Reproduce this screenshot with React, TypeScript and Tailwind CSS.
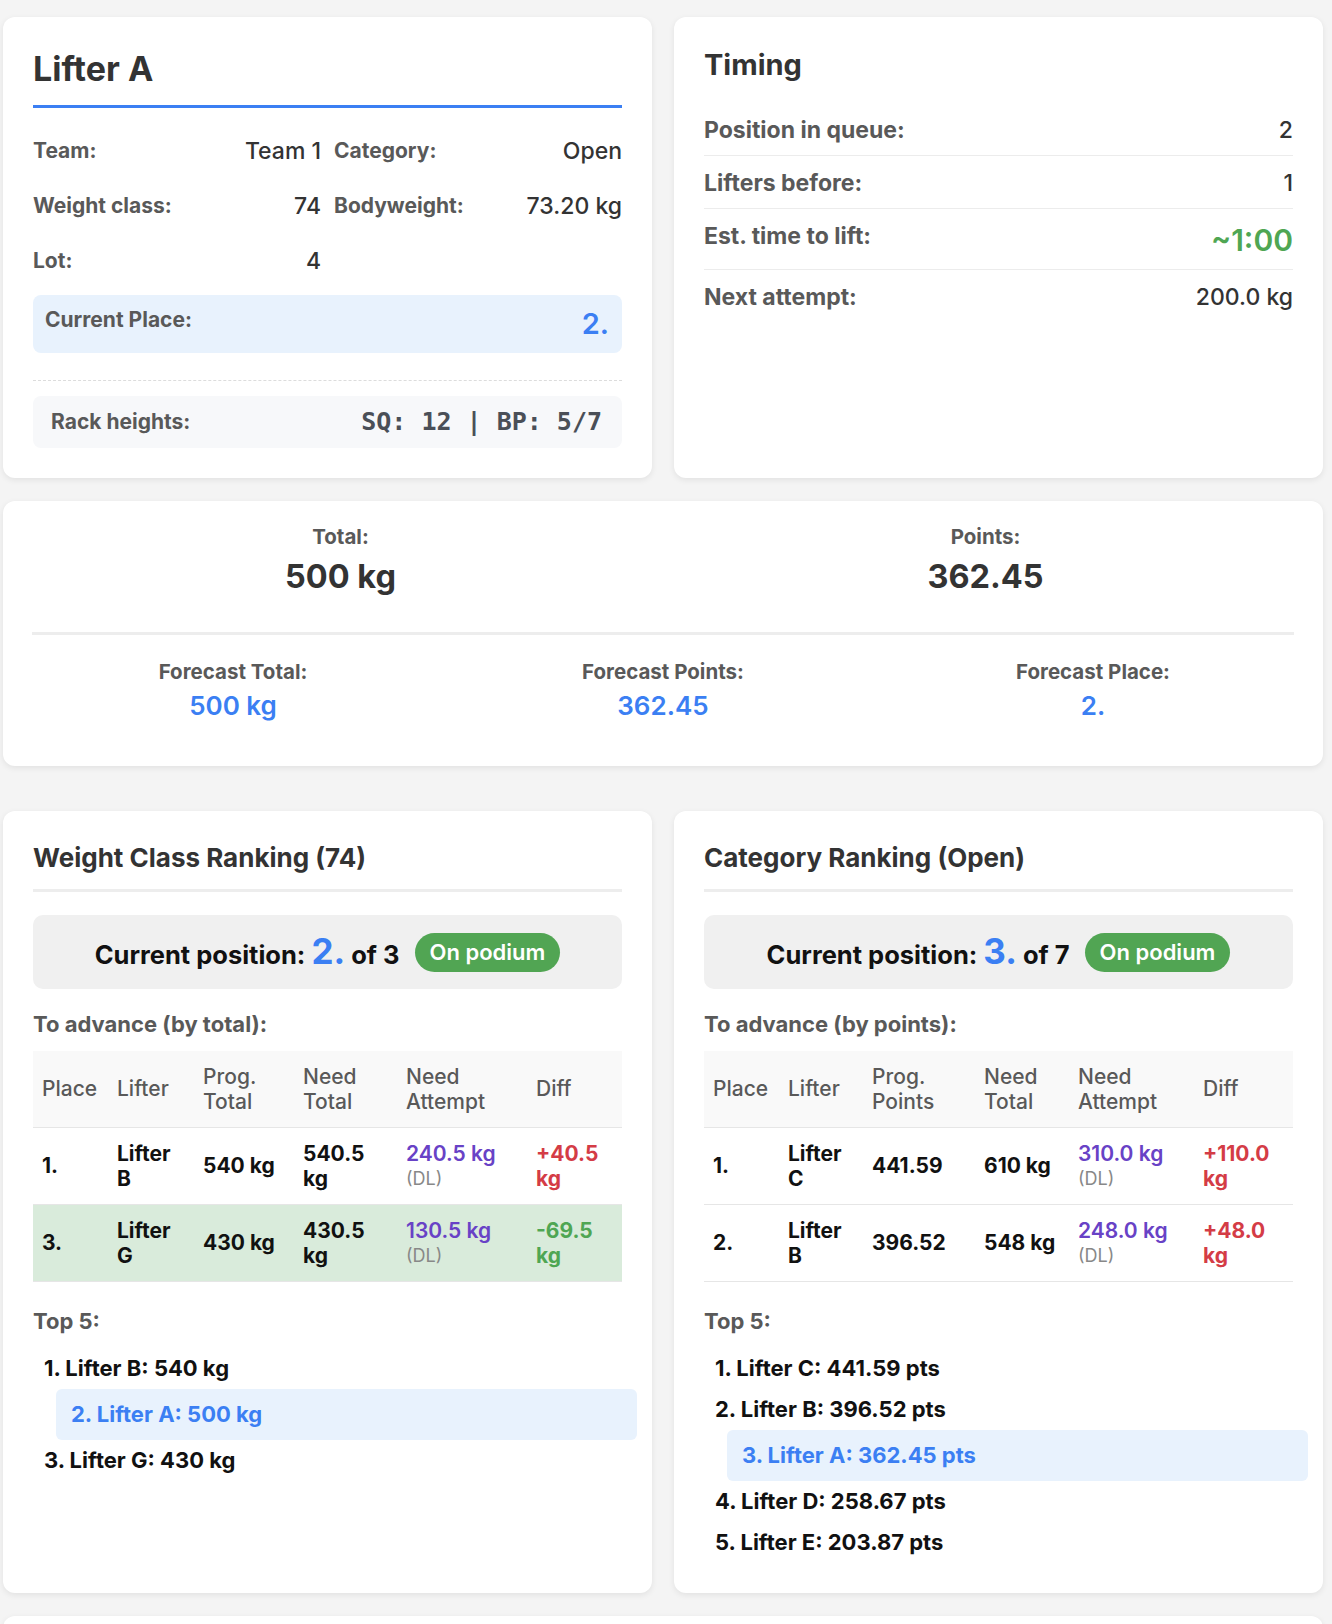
import React from "react";

type Row = { place: string; lifter: string; prog: React.ReactNode; need: React.ReactNode; attempt: string; diff: React.ReactNode; diffColor: string; highlight?: boolean };

const blue = "text-[#3b7ff3]";

function Card(props: { className?: string; children?: React.ReactNode }) {
	return (
		<div className={`bg-white rounded-[12px] shadow-[0_2px_6px_rgba(0,0,0,0.08)] ${props.className ?? ""}`}>
			{props.children}
		</div>
	);
}

function Info(props: { label: string; value?: string }) {
	return (
		<div className="flex justify-between leading-[30px]">
			<span className="text-[21px] font-bold text-[#595959]">{props.label}</span>
			<span className="text-[23px] font-medium text-[#333]">{props.value}</span>
		</div>
	);
}

function LifterCard() {
	return (
		<Card className="p-[30px]">
			<h1 className="text-[34px] leading-[40px] font-bold text-[#333] pt-[2px] pb-[16px] border-b-[3px] border-[#3b7ff3]">Lifter A</h1>
			<div className="mt-[28px] grid grid-cols-2 gap-x-[13px] gap-y-[25px]">
				<Info label="Team:" value="Team 1" />
				<Info label="Category:" value="Open" />
				<Info label="Weight class:" value="74" />
				<Info label="Bodyweight:" value="73.20 kg" />
				<Info label="Lot:" value="4" />
				<div />
			</div>
			<div className="mt-[19px] bg-[#e8f2fd] rounded-[8px] pl-[12px] pr-[13px] py-[8px] flex justify-between items-start">
				<span className="text-[21px] font-bold text-[#595959] leading-[33px]">Current Place:</span>
				<span className={`text-[29px] font-semibold leading-[42px] ${blue}`}>2.</span>
			</div>
			<div className="mt-[27px] border-t border-dashed border-[#dcdcdc] pt-[15px]">
				<div className="h-[52px] bg-[#f7f8fa] rounded-[8px] pl-[18px] pr-[20px] flex items-center justify-between">
					<span className="text-[21px] font-bold text-[#595959]">Rack heights:</span>
					<span className="font-['DejaVu_Sans_Mono',monospace] text-[25px] font-bold text-[#4a4f57]">SQ: 12 | BP: 5/7</span>
				</div>
			</div>
		</Card>
	);
}

function TimingRow(props: { label: string; children: React.ReactNode; last?: boolean }) {
	return (
		<div className={`flex justify-between items-start pt-[12px] pb-[10px] ${props.last ? "" : "border-b border-[#ececec]"}`}>
			<span className="text-[23px] font-bold text-[#595959] leading-[30px]">{props.label}</span>
			{props.children}
		</div>
	);
}

function TimingCard() {
	return (
		<Card className="p-[30px]">
			<h2 className="text-[29px] leading-[35px] font-bold text-[#333] mb-[21px]">Timing</h2>
			<TimingRow label="Position in queue:"><span className="text-[23px] font-medium text-[#333] leading-[30px]">2</span></TimingRow>
			<TimingRow label="Lifters before:"><span className="text-[23px] font-medium text-[#333] leading-[30px]">1</span></TimingRow>
			<TimingRow label="Est. time to lift:"><span className="text-[30px] font-semibold text-[#4fa653] leading-[38px]">~1:00</span></TimingRow>
			<TimingRow label="Next attempt:" last><span className="text-[23px] font-medium text-[#333] leading-[30px]">200.0 kg</span></TimingRow>
		</Card>
	);
}

function Stat(props: { label: string; value: string; big?: boolean }) {
	return (
		<div className="text-center">
			<div className="text-[20.5px] font-bold text-[#595959] leading-[28px]">{props.label}</div>
			{props.big ? (
				<div className="mt-[4px] text-[32.5px] font-bold text-[#333] leading-[44px]">{props.value}</div>
			) : (
				<div className={`mt-[2px] text-[26px] font-semibold leading-[36px] ${blue}`}>{props.value}</div>
			)}
		</div>
	);
}

function SummaryCard() {
	return (
		<Card className="px-[15px] pt-[22px] pb-[42px] mb-[22px]">
			<div className="grid grid-cols-2">
				<Stat label="Total:" value="500 kg" big />
				<Stat label="Points:" value="362.45" big />
			</div>
			<div className="mt-[33px] mx-[14px] h-[3px] bg-[#ededed]" />
			<div className="mt-[23px] grid grid-cols-3">
				<Stat label="Forecast Total:" value="500 kg" />
				<Stat label="Forecast Points:" value="362.45" />
				<Stat label="Forecast Place:" value="2." />
			</div>
		</Card>
	);
}

function RankTable(props: { widths: string[]; progLabel: string; rows: Row[] }) {
	const headers: React.ReactNode[] = [
		"Place",
		"Lifter",
		<>Prog.<br />{props.progLabel}</>,
		<>Need<br />Total</>,
		<>Need<br />Attempt</>,
		"Diff",
	];
	return (
		<table className="mt-[12px] w-full table-fixed border-collapse">
			<colgroup>
				{props.widths.map((w, i) => <col key={i} className={w} />)}
			</colgroup>
			<thead>
				<tr className="h-[76px] bg-[#f9f9f9] border-b border-[#e6e6e6]">
					{headers.map((h, i) => (
						<th key={i} className="px-[9px] text-left align-middle text-[21px] font-medium text-[#595959] leading-[25px]">{h}</th>
					))}
				</tr>
			</thead>
			<tbody>
				{props.rows.map(r => (
					<tr key={r.place} className={`h-[77px] border-b border-[#e6e6e6] ${r.highlight ? "bg-[#d9ebdb]" : ""}`}>
						<td className="px-[9px] text-[21px] font-bold text-[#111] leading-[25px]">{r.place}</td>
						<td className="px-[9px] text-[21px] font-bold text-[#111] leading-[25px]">Lifter<br />{r.lifter}</td>
						<td className="px-[9px] text-[21px] font-bold text-[#111] leading-[25px] whitespace-nowrap">{r.prog}</td>
						<td className="px-[9px] text-[21px] font-bold text-[#111] leading-[25px] whitespace-nowrap">{r.need}</td>
						<td className="px-[9px] leading-[25px] whitespace-nowrap">
							<div className="text-[21px] font-semibold text-[#6842c6]">{r.attempt}</div>
							<div className="text-[18px] text-[#888]">(DL)</div>
						</td>
						<td className={`px-[9px] text-[21px] font-bold leading-[25px] whitespace-nowrap ${r.diffColor}`}>{r.diff}</td>
					</tr>
				))}
			</tbody>
		</table>
	);
}

function TopList(props: { items: string[]; mine: number }) {
	return (
		<>
			<div className="mt-[24px] text-[22px] font-bold text-[#595959] leading-[30px]">Top 5:</div>
			<ol className="mt-[12px] pl-[11px]">
				{props.items.map((t, i) => i === props.mine ? (
					<li key={i} className={`ml-[12px] mr-[-15px] px-[15px] py-[10px] bg-[#e8f2fd] rounded-[6px] text-[22px] font-bold leading-[31px] ${blue}`}>{t}</li>
				) : (
					<li key={i} className="py-[5px] text-[22px] font-bold text-[#111] leading-[31px]">{t}</li>
				))}
			</ol>
		</>
	);
}

function RankCard(props: { title: string; pos: string; of: string; advance: string; widths: string[]; progLabel: string; rows: Row[]; top: string[]; mine: number }) {
	return (
		<Card className="p-[30px]">
			<h2 className="text-[26px] leading-[32px] font-bold text-[#333] pt-[1px] pb-[15px] border-b-[3px] border-[#ededed]">{props.title}</h2>
			<div className="mt-[23px] h-[74px] bg-[#f0f0f0] rounded-[10px] flex items-center justify-center">
				<span className="text-[25.5px] font-bold text-[#111] leading-[32px]">
					Current position: <span className={`text-[35px] leading-none ${blue}`}>{props.pos}</span> of {props.of}
				</span>
				<span className="ml-[15px] h-[39px] px-[15px] rounded-full bg-[#51a553] text-white text-[22px] font-semibold flex items-center">On podium</span>
			</div>
			<div className="mt-[20px] text-[22px] font-bold text-[#595959] leading-[30px]">{props.advance}</div>
			<RankTable widths={props.widths} progLabel={props.progLabel} rows={props.rows} />
			<TopList items={props.top} mine={props.mine} />
		</Card>
	);
}

const weightRows: Row[] = [
	{ place: "1.", lifter: "B", prog: "540 kg", need: <>540.5<br />kg</>, attempt: "240.5 kg", diff: <>+40.5<br />kg</>, diffColor: "text-[#d43c46]" },
	{ place: "3.", lifter: "G", prog: "430 kg", need: <>430.5<br />kg</>, attempt: "130.5 kg", diff: <>-69.5<br />kg</>, diffColor: "text-[#4fa653]", highlight: true },
];

const categoryRows: Row[] = [
	{ place: "1.", lifter: "C", prog: "441.59", need: "610 kg", attempt: "310.0 kg", diff: <>+110.0<br />kg</>, diffColor: "text-[#d43c46]" },
	{ place: "2.", lifter: "B", prog: "396.52", need: "548 kg", attempt: "248.0 kg", diff: <>+48.0<br />kg</>, diffColor: "text-[#d43c46]" },
];

export default function App() {
	return (
		<div className="min-h-screen bg-[#f4f4f4] pl-[3px] pr-[9px] pt-[17px] font-['Inter',sans-serif]">
			<div className="flex flex-col gap-[23px]">
				<div className="grid grid-cols-2 gap-[22px]">
					<LifterCard />
					<TimingCard />
				</div>
				<SummaryCard />
				<div className="grid grid-cols-2 gap-[22px]">
					<RankCard
						title="Weight Class Ranking (74)"
						pos="2."
						of="3"
						advance="To advance (by total):"
						widths={["w-[75px]", "w-[86px]", "w-[100px]", "w-[103px]", "w-[130px]", "w-[95px]"]}
						progLabel="Total"
						rows={weightRows}
						top={["1. Lifter B: 540 kg", "2. Lifter A: 500 kg", "3. Lifter G: 430 kg"]}
						mine={1}
					/>
					<RankCard
						title="Category Ranking (Open)"
						pos="3."
						of="7"
						advance="To advance (by points):"
						widths={["w-[75px]", "w-[84px]", "w-[112px]", "w-[94px]", "w-[125px]", "w-[99px]"]}
						progLabel="Points"
						rows={categoryRows}
						top={["1. Lifter C: 441.59 pts", "2. Lifter B: 396.52 pts", "3. Lifter A: 362.45 pts", "4. Lifter D: 258.67 pts", "5. Lifter E: 203.87 pts"]}
						mine={2}
					/>
				</div>
				<Card className="h-[120px]" />
			</div>
		</div>
	);
}
